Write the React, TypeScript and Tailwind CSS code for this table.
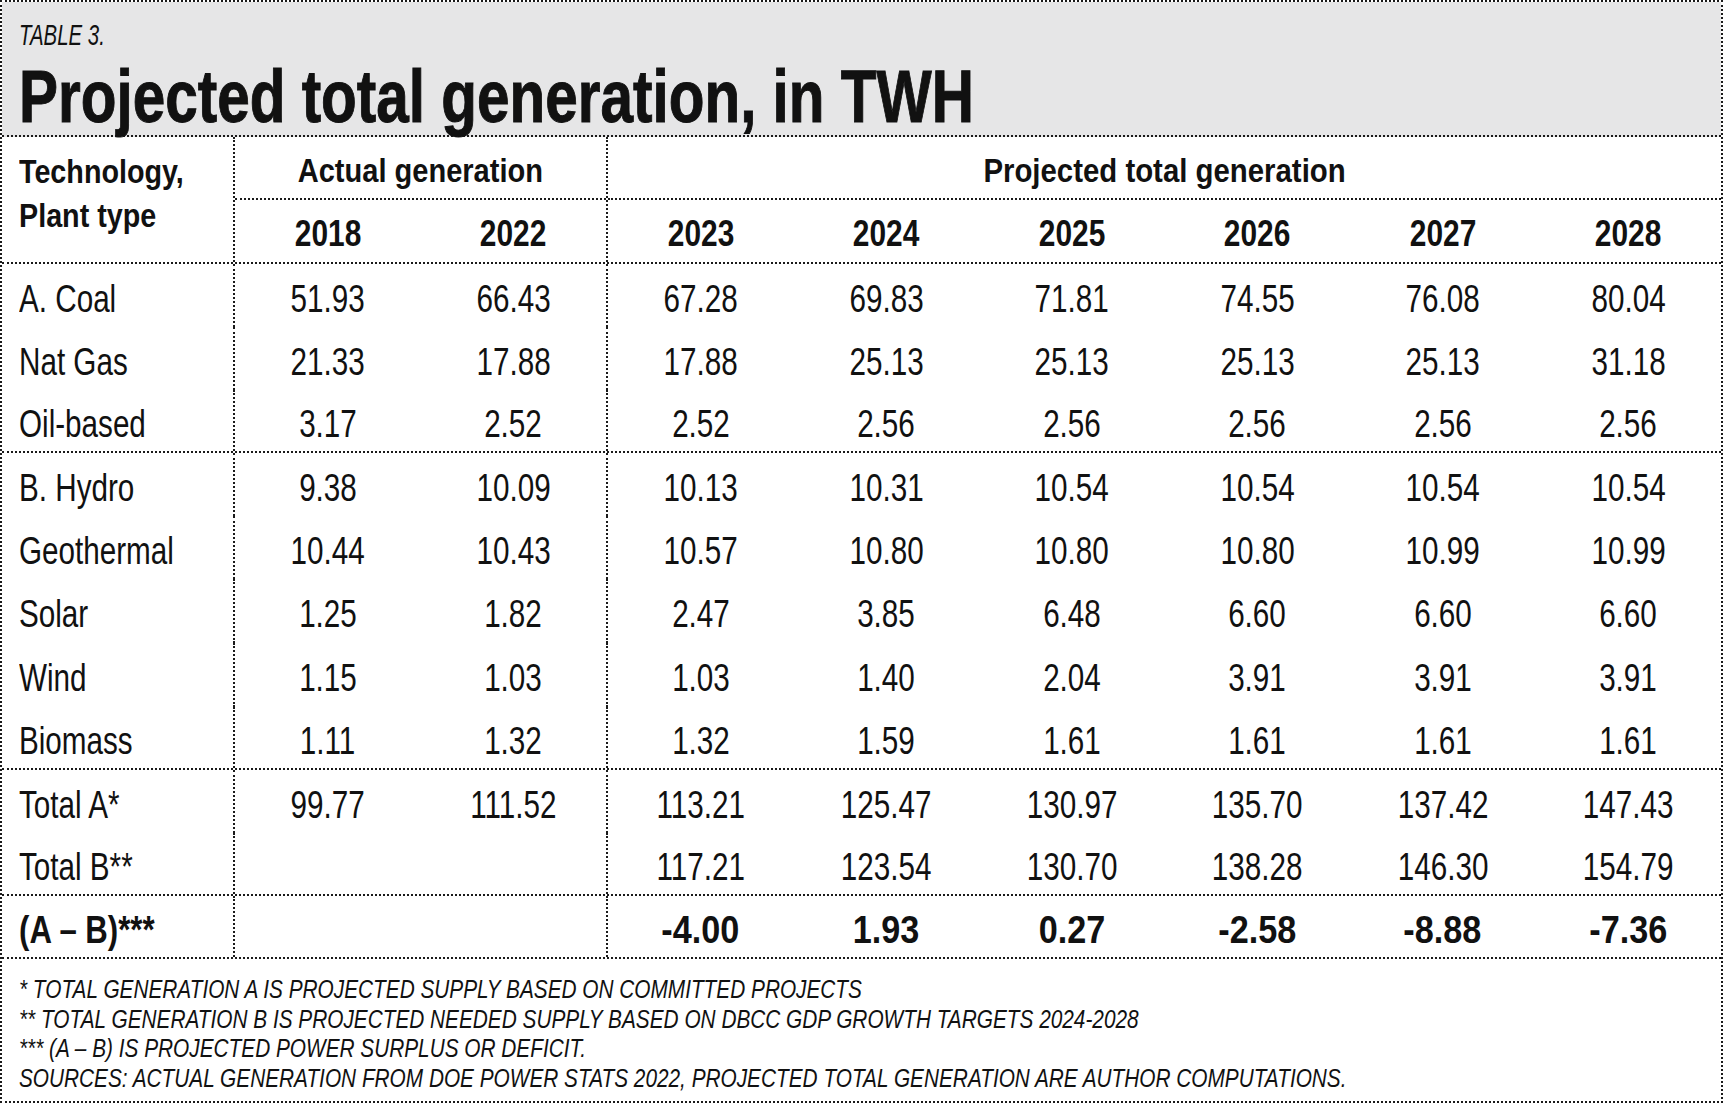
import React from "react";

type Row = {
  label: string;
  actual: string[];
  projected: string[];
  bold?: boolean;
  h?: string;
};

const groups: Row[][] = [
  [
    { label: "A. Coal", actual: ["51.93", "66.43"], projected: ["67.28", "69.83", "71.81", "74.55", "76.08", "80.04"] },
    { label: "Nat Gas", actual: ["21.33", "17.88"], projected: ["17.88", "25.13", "25.13", "25.13", "25.13", "31.18"] },
    { label: "Oil-based", actual: ["3.17", "2.52"], projected: ["2.52", "2.56", "2.56", "2.56", "2.56", "2.56"] },
  ],
  [
    { label: "B. Hydro", actual: ["9.38", "10.09"], projected: ["10.13", "10.31", "10.54", "10.54", "10.54", "10.54"] },
    { label: "Geothermal", actual: ["10.44", "10.43"], projected: ["10.57", "10.80", "10.80", "10.80", "10.99", "10.99"] },
    { label: "Solar", actual: ["1.25", "1.82"], projected: ["2.47", "3.85", "6.48", "6.60", "6.60", "6.60"], h: "h-[64px]" },
    { label: "Wind", actual: ["1.15", "1.03"], projected: ["1.03", "1.40", "2.04", "3.91", "3.91", "3.91"], h: "h-[64px]" },
    { label: "Biomass", actual: ["1.11", "1.32"], projected: ["1.32", "1.59", "1.61", "1.61", "1.61", "1.61"] },
  ],
  [
    { label: "Total A*", actual: ["99.77", "111.52"], projected: ["113.21", "125.47", "130.97", "135.70", "137.42", "147.43"] },
    { label: "Total B**", actual: ["", ""], projected: ["117.21", "123.54", "130.70", "138.28", "146.30", "154.79"] },
  ],
  [
    { label: "(A – B)***", actual: ["", ""], projected: ["-4.00", "1.93", "0.27", "-2.58", "-8.88", "-7.36"], bold: true },
  ],
];

const actualYears = ["2018", "2022"];
const projectedYears = ["2023", "2024", "2025", "2026", "2027", "2028"];

const notes = [
  "* TOTAL GENERATION A IS PROJECTED SUPPLY BASED ON COMMITTED PROJECTS",
  "** TOTAL GENERATION B IS PROJECTED NEEDED SUPPLY BASED ON DBCC GDP GROWTH TARGETS 2024-2028",
  "*** (A – B) IS PROJECTED POWER SURPLUS OR DEFICIT.",
  "SOURCES: ACTUAL GENERATION FROM DOE POWER STATS 2022, PROJECTED TOTAL GENERATION ARE AUTHOR COMPUTATIONS.",
];

// the source uses a condensed face; squeeze Liberation Sans to get the same widths
function Narrow({ children, className = "" }: { children: React.ReactNode; className?: string }) {
  return <span className={`inline-block whitespace-nowrap ${className}`}>{children}</span>;
}

function Cell({ value, bold }: { value: string; bold?: boolean }) {
  return (
    <div className="flex-1 flex items-center justify-center pt-[7px]">
      <Narrow className={bold ? "scale-x-[0.9]" : "scale-x-[0.78]"}>{value}</Narrow>
    </div>
  );
}

function DataRow({ row, last }: { row: Row; last: boolean }) {
  const weight = row.bold ? "font-bold" : "font-normal";
  return (
    <div
      className={`flex ${row.h ?? "h-[63px]"} ${last ? "border-b-2 border-dotted border-[#1a1a1a]" : ""} text-[38px] ${weight}`}
    >
      <div className="w-[233px] shrink-0 border-r-2 border-dotted border-[#1a1a1a] flex items-center pl-[17px] pt-[7px]">
        <Narrow className={`origin-left ${row.bold ? "scale-x-[0.82]" : "scale-x-[0.78]"}`}>{row.label}</Narrow>
      </div>
      <div className="w-[373px] shrink-0 border-r-2 border-dotted border-[#1a1a1a] flex">
        {row.actual.map((v, i) => (
          <Cell key={i} value={v} bold={row.bold} />
        ))}
      </div>
      <div className="flex-1 flex">
        {row.projected.map((v, i) => (
          <Cell key={i} value={v} bold={row.bold} />
        ))}
      </div>
    </div>
  );
}

function YearCell({ year }: { year: string }) {
  return (
    <div className="flex-1 flex items-center justify-center pt-[6px]">
      <Narrow className="scale-x-[0.83]">{year}</Narrow>
    </div>
  );
}

export default function App() {
  return (
    <div className="w-[1725px] h-[1116px] bg-white text-[#111] font-['Liberation_Sans',Arial,sans-serif]">
      <div className="w-[1723px] border-2 border-dotted border-[#1a1a1a]">
        <div className="h-[135px] bg-[#e6e6e7] border-b-2 border-dotted border-[#1a1a1a] pl-[17px] pt-[15px]">
          <div className="text-[30px] italic leading-[36px]">
            <Narrow className="origin-left scale-x-[0.68]">TABLE 3.</Narrow>
          </div>
          <div className="text-[74px] font-bold leading-[74px] mt-[7px] [-webkit-text-stroke:1px_#111]">
            <Narrow className="origin-left scale-x-[0.79]">Projected total generation, in TWH</Narrow>
          </div>
        </div>

        <div className="flex h-[127px] border-b-2 border-dotted border-[#1a1a1a] font-bold text-[33px]">
          <div className="w-[233px] shrink-0 border-r-2 border-dotted border-[#1a1a1a] pl-[17px] pt-[13px] leading-[44px]">
            <Narrow className="origin-left scale-x-[0.87]">Technology,</Narrow>
            <br />
            <Narrow className="origin-left scale-x-[0.87]">Plant type</Narrow>
          </div>
          <div className="w-[373px] shrink-0 border-r-2 border-dotted border-[#1a1a1a] flex flex-col">
            <div className="h-[63px] border-b-2 border-dotted border-[#1a1a1a] flex items-center justify-center pt-[6px]">
              <Narrow className="scale-x-[0.88]">Actual generation</Narrow>
            </div>
            <div className="flex-1 flex text-[36px]">
              {actualYears.map((y) => (
                <YearCell key={y} year={y} />
              ))}
            </div>
          </div>
          <div className="flex-1 flex flex-col">
            <div className="h-[63px] border-b-2 border-dotted border-[#1a1a1a] flex items-center justify-center pt-[6px]">
              <Narrow className="scale-x-[0.89]">Projected total generation</Narrow>
            </div>
            <div className="flex-1 flex text-[36px]">
              {projectedYears.map((y) => (
                <YearCell key={y} year={y} />
              ))}
            </div>
          </div>
        </div>

        {groups.map((g, gi) => (
          <div key={gi}>
            {g.map((row, ri) => (
              <DataRow key={row.label} row={row} last={ri === g.length - 1} />
            ))}
          </div>
        ))}

        <div className="h-[142px] pl-[17px] pt-[16px] italic text-[26px] leading-[29.5px]">
          {notes.map((n) => (
            <div key={n}>
              <Narrow className="origin-left scale-x-[0.8]">{n}</Narrow>
            </div>
          ))}
        </div>
      </div>
    </div>
  );
}
